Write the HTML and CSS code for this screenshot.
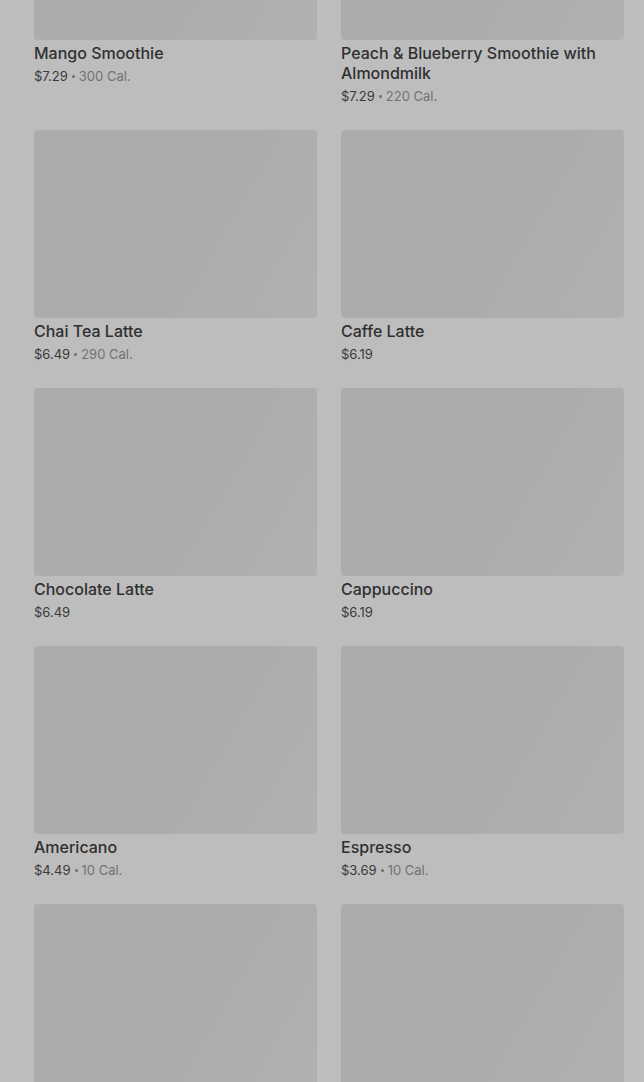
FILE: index.html
```html
<!DOCTYPE html>
<html lang="en">
<head>
 <meta charset="UTF-8">
 <meta name="viewport" content="width=device-width, initial-scale=1.0">
 <title>Menu</title>
 <link rel="stylesheet" href="styles.css">
</head>
<body>
 <div class="menuGrid">

  <div class="menuItem">
   <div class="itemImg"></div>
   <div class="itemName">Mango Smoothie</div>
   <div class="itemMeta"><span class="price">$7.29</span><span class="dot"></span><span class="cal">300 Cal.</span></div>
  </div>

  <div class="menuItem">
   <div class="itemImg"></div>
   <div class="itemName">Peach &amp; Blueberry Smoothie with Almondmilk</div>
   <div class="itemMeta"><span class="price">$7.29</span><span class="dot"></span><span class="cal">220 Cal.</span></div>
  </div>

  <div class="menuItem">
   <div class="itemImg"></div>
   <div class="itemName">Chai Tea Latte</div>
   <div class="itemMeta"><span class="price">$6.49</span><span class="dot"></span><span class="cal">290 Cal.</span></div>
  </div>

  <div class="menuItem">
   <div class="itemImg"></div>
   <div class="itemName">Caffe Latte</div>
   <div class="itemMeta"><span class="price">$6.19</span></div>
  </div>

  <div class="menuItem">
   <div class="itemImg"></div>
   <div class="itemName">Chocolate Latte</div>
   <div class="itemMeta"><span class="price">$6.49</span></div>
  </div>

  <div class="menuItem">
   <div class="itemImg"></div>
   <div class="itemName">Cappuccino</div>
   <div class="itemMeta"><span class="price">$6.19</span></div>
  </div>

  <div class="menuItem">
   <div class="itemImg"></div>
   <div class="itemName">Americano</div>
   <div class="itemMeta"><span class="price">$4.49</span><span class="dot"></span><span class="cal">10 Cal.</span></div>
  </div>

  <div class="menuItem">
   <div class="itemImg"></div>
   <div class="itemName">Espresso</div>
   <div class="itemMeta"><span class="price">$3.69</span><span class="dot"></span><span class="cal">10 Cal.</span></div>
  </div>

  <div class="menuItem">
   <div class="itemImg"></div>
  </div>

  <div class="menuItem">
   <div class="itemImg"></div>
  </div>

 </div>
</body>
</html>
```

FILE: styles.css
```css
html, body{
 margin: 0;
 padding: 0;
 background-color: #bdbdbd;
 overflow: hidden;
}

body{
 font-family: Inter, "Liberation Sans", sans-serif;
 color: #333333;
}

.menuGrid{
 display: grid;
 grid-template-columns: 283px 283px;
 column-gap: 24px;
 row-gap: 24px;
 padding: 0 20px 0 34px;
 /* list is scrolled, first row images are cut off */
 margin-top: -148px;
}

.menuItem{
 display: flex;
 flex-direction: column;
}

.itemImg{
 height: 188px;
 border-radius: 4px;
 background: linear-gradient(120deg, #acacac 0%, #acacac 55%, #b1b1b1 100%);
}

.itemName{
 margin-top: 3px;
 font-size: 16px;
 font-weight: 500;
 line-height: 20px;
 color: #303030;
}

.itemMeta{
 display: flex;
 align-items: center;
 margin-top: 3px;
 height: 20px;
 font-size: 13px;
 line-height: 20px;
 color: #3a3a3a;
}

.itemMeta .dot{
 width: 3px;
 height: 3px;
 margin: 1px 4px 0 4px;
 border-radius: 50%;
 background-color: #6e6e6e;
}

.itemMeta .cal{
 color: #727272;
}
```
